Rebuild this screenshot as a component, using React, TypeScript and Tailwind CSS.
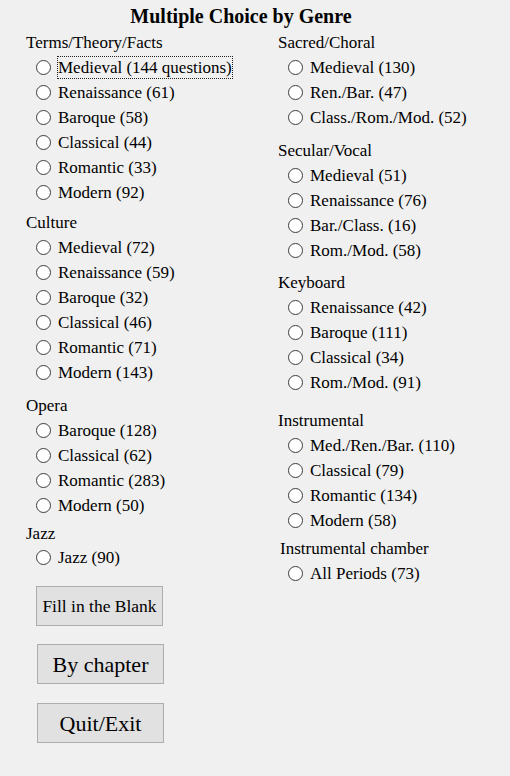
import React from "react";

type Group = { title: string; items: string[]; mt: string; headH?: string; titleClass?: string };

const LEFT: Group[] = [
  { title: "Terms/Theory/Facts", mt: "mt-0", items: ["Medieval (144 questions)", "Renaissance (61)", "Baroque (58)", "Classical (44)", "Romantic (33)", "Modern (92)"] },
  { title: "Culture", mt: "mt-[5px]", items: ["Medieval (72)", "Renaissance (59)", "Baroque (32)", "Classical (46)", "Romantic (71)", "Modern (143)"] },
  { title: "Opera", mt: "mt-[8px]", items: ["Baroque (128)", "Classical (62)", "Romantic (283)", "Modern (50)"] },
  { title: "Jazz", mt: "mt-[5px]", headH: "h-[22px]", items: ["Jazz (90)"] },
];

const RIGHT: Group[] = [
  { title: "Sacred/Choral", mt: "mt-0", items: ["Medieval (130)", "Ren./Bar. (47)", "Class./Rom./Mod. (52)"] },
  { title: "Secular/Vocal", mt: "mt-[8px]", items: ["Medieval (51)", "Renaissance (76)", "Bar./Class. (16)", "Rom./Mod. (58)"] },
  { title: "Keyboard", mt: "mt-[7px]", items: ["Renaissance (42)", "Baroque (111)", "Classical (34)", "Rom./Mod. (91)"] },
  { title: "Instrumental", mt: "mt-[13px]", items: ["Med./Ren./Bar. (110)", "Classical (79)", "Romantic (134)", "Modern (58)"] },
  { title: "Instrumental chamber", mt: "mt-[3px]", titleClass: "pl-[2px]", items: ["All Periods (73)"] },
];

function Radio({ label, focused }: { label: string; focused?: boolean }) {
  return (
    <div className="flex h-[25px] items-center">
      <span className="ml-[10px] mr-[7px] h-[15px] w-[15px] shrink-0 rounded-full border border-[#3c3c3c] bg-white" />
      {focused ? <span className="leading-[21px] outline outline-1 outline-dotted outline-[#222]">{label}</span> : label}
    </div>
  );
}

function GroupBlock({ g, focusFirst }: { g: Group; focusFirst?: boolean }) {
  return (
    <div className={g.mt}>
      <div className={`flex items-center ${g.headH ?? "h-[25px]"} ${g.titleClass ?? ""}`}>{g.title}</div>
      {g.items.map((it, i) => (
        <Radio key={it} label={it} focused={focusFirst && i === 0} />
      ))}
    </div>
  );
}

export default function App() {
  return (
    <div className="h-[776px] w-[510px] bg-[#f0f0f0] font-['Liberation_Serif','Times_New_Roman',serif] text-[17px] text-black">
      <div className="flex h-[30px] w-[482px] items-center justify-center pt-[1px] text-[20px] font-bold">Multiple Choice by Genre</div>
      <div className="flex pl-[26px]">
        <div className="w-[252px]">
          {LEFT.map((g, i) => (
            <GroupBlock key={g.title} g={g} focusFirst={i === 0} />
          ))}
          <div className="mt-[16px] flex flex-col items-start pl-[10px]">
            <button className="h-[40px] w-[127px] border border-[#adadad] bg-[#e1e1e1] text-[17.5px]">Fill in the Blank</button>
            <button className="ml-[1px] mt-[18px] h-[40px] w-[127px] border border-[#adadad] bg-[#e1e1e1] text-[22px]">By chapter</button>
            <button className="ml-[1px] mt-[19px] h-[40px] w-[127px] border border-[#adadad] bg-[#e1e1e1] text-[22px]">Quit/Exit</button>
          </div>
        </div>
        <div className="flex-1">
          {RIGHT.map((g) => (
            <GroupBlock key={g.title} g={g} />
          ))}
        </div>
      </div>
    </div>
  );
}
